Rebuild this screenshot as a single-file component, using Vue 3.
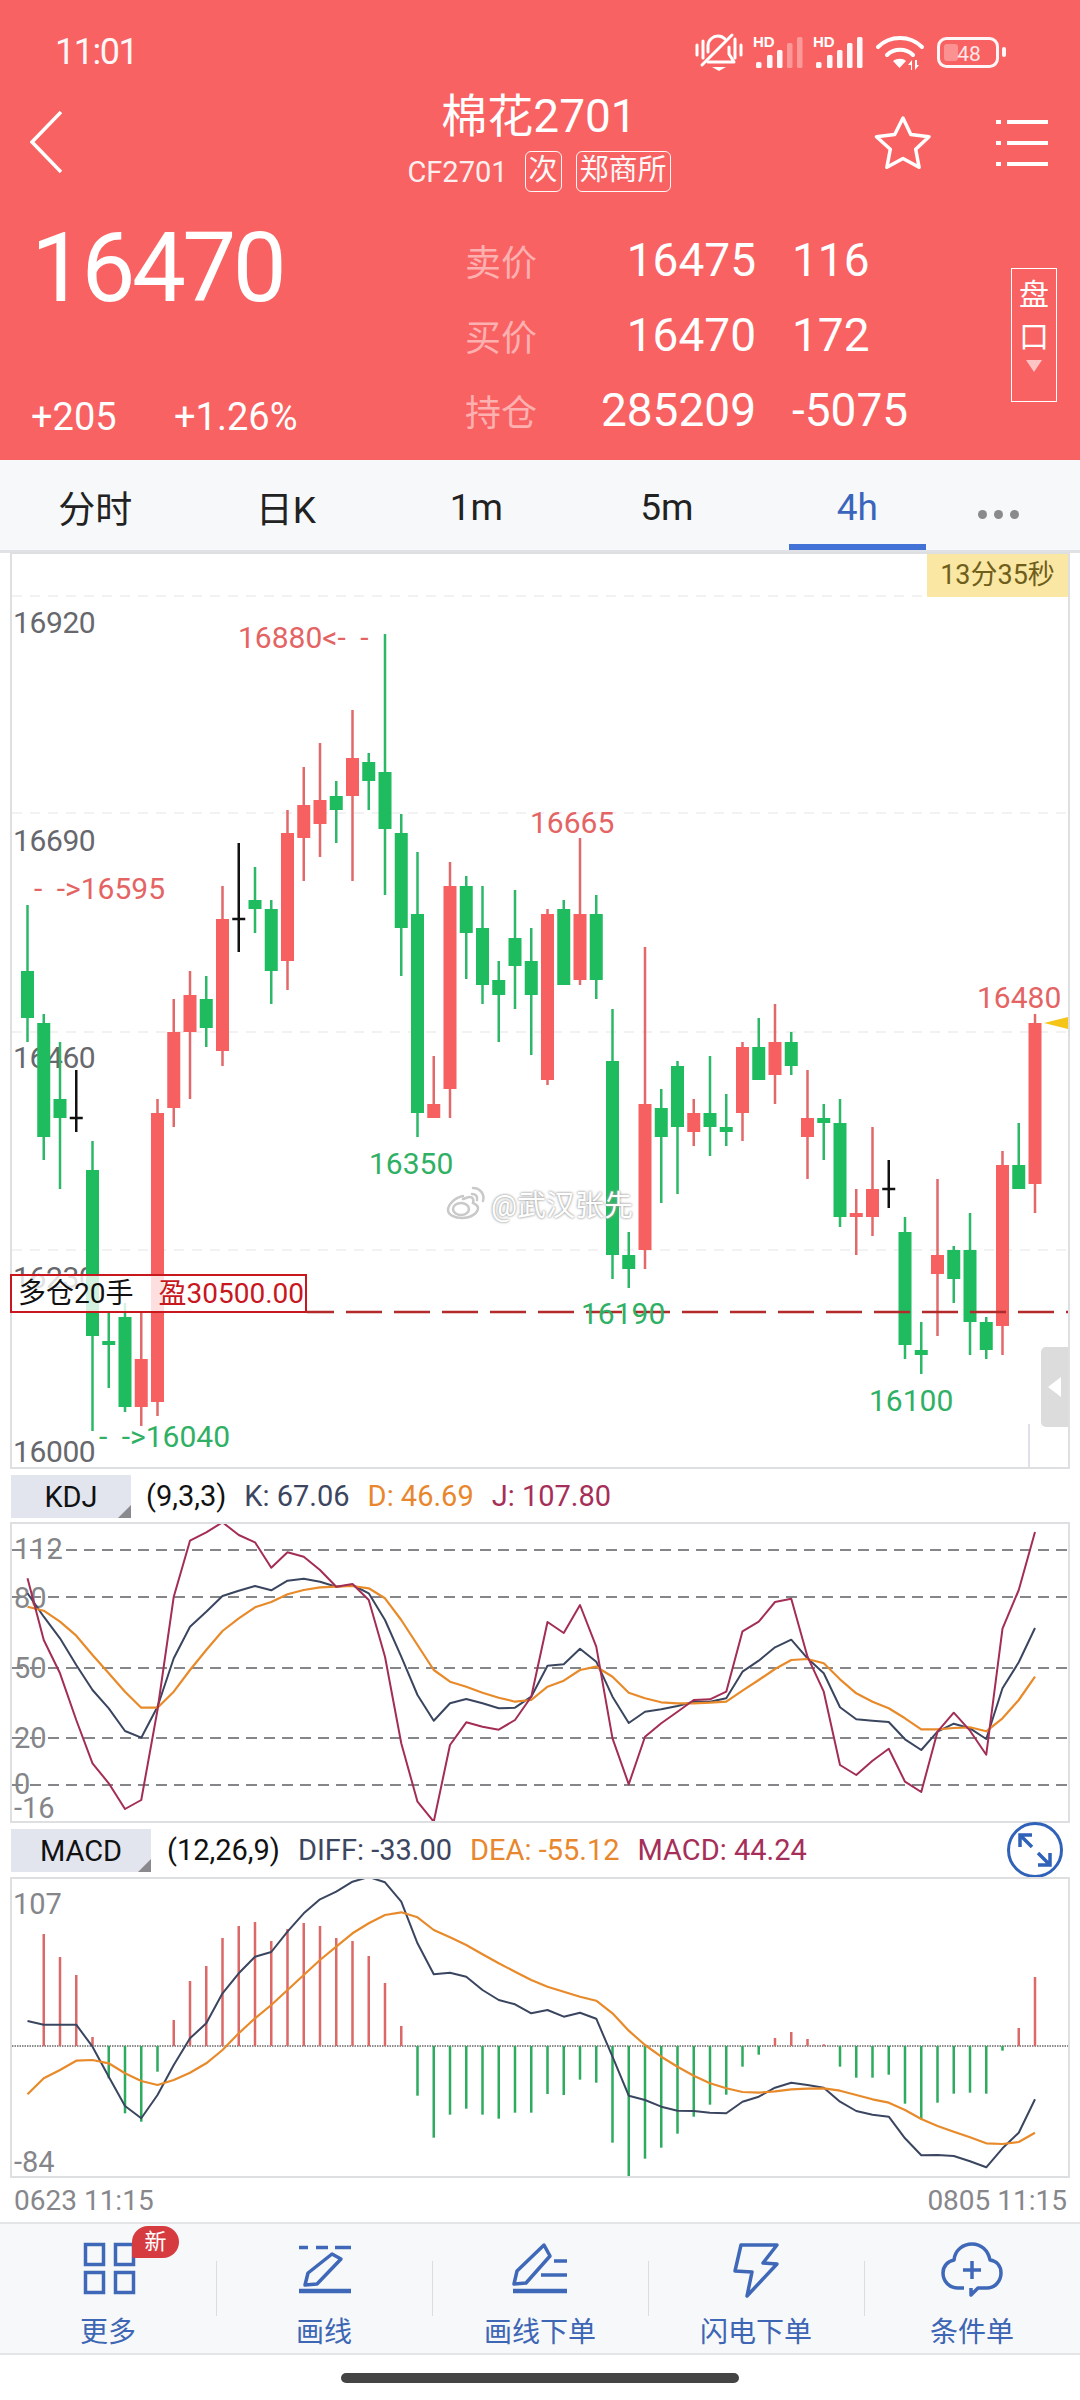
<script setup>
const X = (i) => 27.5 + i * 16.25

const raw = [
  ['g',905,971,1018,1042],['g',1014,1023,1137,1160],['g',1042,1099,1118,1189],['k',1070,1118,1118,1132],
  ['g',1141,1170,1336,1431],['g',1312,1341,1345,1388],['g',1303,1317,1407,1412],['r',1312,1359,1407,1426],
  ['r',1099,1113,1402,1416],['r',999,1032,1108,1127],['r',971,995,1032,1099],['g',976,999,1028,1047],
  ['r',886,919,1051,1066],['k',843,919,919,952],['g',867,900,909,933],['g',900,909,971,1004],
  ['r',810,833,961,990],['r',767,805,838,881],['r',743,800,824,857],['g',781,796,810,843],
  ['r',710,758,796,881],['g',753,762,781,810],['g',634,772,829,895],['g',814,833,928,976],
  ['g',852,914,1113,1137],['r',1056,1104,1118,1118],['r',862,886,1089,1118],['g',876,886,933,979],
  ['g',886,928,985,1004],['g',961,980,995,1042],['g',890,938,966,1009],['g',928,961,995,1055],
  ['r',909,914,1080,1085],['g',900,909,985,985],['r',838,914,980,985],['g',895,914,980,999],
  ['g',1009,1061,1255,1279],['g',1232,1255,1269,1288],['r',947,1104,1250,1269],['g',1089,1108,1137,1203],
  ['g',1061,1066,1127,1194],['r',1099,1113,1132,1146],['g',1056,1113,1127,1156],['g',1094,1127,1132,1146],
  ['r',1042,1047,1113,1141],['g',1018,1047,1080,1080],['r',1004,1042,1075,1104],['g',1032,1042,1066,1075],
  ['r',1070,1118,1137,1179],['g',1104,1118,1123,1160],['g',1099,1123,1217,1227],['r',1189,1213,1217,1255],
  ['r',1127,1189,1217,1236],['k',1160,1189,1189,1208],['g',1217,1232,1345,1359],['g',1322,1350,1355,1374],
  ['r',1179,1255,1274,1336],['g',1246,1250,1279,1303],['g',1213,1250,1322,1355],['g',1317,1322,1350,1359],
  ['r',1151,1165,1326,1355],['g',1123,1165,1189,1189],['r',1014,1023,1184,1213],
]
const candles = raw.map(([t, h, a, b, l], i) => ({ t, h, a, b, l, x: X(i) }))

const kz = [370,440,505,585,660,715,783,803,710,565,470,425,378,362,348,361,332,326,335,350,345,370,450,560,675,752,700,687,700,715,713,680,587,583,536,575,680,759,725,718,708,695,695,685,605,572,532,509,565,610,712,748,752,756,808,840,785,761,775,807,655,577,474]
const dz = [410,422,455,497,555,610,665,713,713,665,600,540,483,445,412,396,373,360,352,350,348,355,385,450,525,600,635,650,668,683,695,690,650,632,600,590,620,668,685,697,700,700,698,695,662,630,597,570,567,580,628,670,695,715,745,778,778,774,772,784,745,690,620]
const jz = [325,510,610,750,880,940,1017,990,720,380,212,187,157,195,217,293,247,260,300,350,342,390,560,820,995,1055,825,757,770,779,750,680,456,489,405,530,805,943,800,760,725,690,688,665,484,455,396,386,560,665,885,915,872,836,935,966,785,728,782,854,476,360,186]
const difz = [603,614,614,614,680,770,858,895,825,735,655,610,520,460,410,396,335,280,238,215,185,171,187,245,370,463,458,470,510,540,553,580,570,590,578,596,710,827,840,860,872,873,878,880,845,830,803,788,795,803,845,873,884,890,955,1006,1005,1008,1024,1042,985,938,838]
const deaz = [823,775,750,722,720,730,760,783,795,780,758,730,690,640,595,555,510,465,420,380,340,310,285,277,292,330,352,375,403,430,455,480,500,515,530,542,580,632,675,710,740,767,790,805,816,818,814,808,806,805,812,825,838,848,870,897,918,935,952,970,972,966,938]
const hz = [678,342,411,465,651,775,880,905,755,600,483,438,354,318,306,363,327,309,318,354,363,408,489,618,827,953,884,866,884,896,878,878,822,825,779,788,968,1073,1016,983,941,890,854,824,740,704,654,636,657,673,740,773,773,764,851,898,848,821,818,821,692,624,471]

const pts = (arr, base) => arr.map((z, i) => `${X(i)},${(base + z / 3).toFixed(1)}`).join(' ')
const kLine = pts(kz, 1470)
const dLine = pts(dz, 1470)
const jLine = pts(jz, 1470)
const difLine = pts(difz, 1820)
const deaLine = pts(deaz, 1820)
const bars = hz.map((z, i) => {
  const up = z < 678
  return { x: X(i) - 1.25, y: 1820 + Math.min(z, 678) / 3, h: Math.abs(z - 678) / 3, up }
}).filter((b) => b.h > 0)

const axis = [['16920',633],['16690',851],['16460',1068],['16230',1288],['16000',1462]]
const gridY = [596, 813, 1032, 1250]
const annots = [
  { t: '16880<- -', x: 238, y: 648, c: 'up' },
  { t: '- ->16595', x: 34, y: 899, c: 'up' },
  { t: '16665', x: 530, y: 833, c: 'up' },
  { t: '16480', x: 977, y: 1008, c: 'up' },
  { t: '16350', x: 369, y: 1174, c: 'down' },
  { t: '- ->16040', x: 99, y: 1447, c: 'down' },
  { t: '16190', x: 581, y: 1324, c: 'down' },
  { t: '16100', x: 869, y: 1411, c: 'down' },
]
const kdjGrid = [1550, 1597, 1668, 1738, 1785]
const kdjLabels = [['112',1559],['80',1608],['50',1678],['20',1748],['0',1794],['-16',1818]]

const tabs = ['分时', '日K', '1m', '5m', '4h']
const quotes = [
  { label: '卖价', val: '16475', qty: '116' },
  { label: '买价', val: '16470', qty: '172' },
  { label: '持仓', val: '285209', qty: '-5075' },
]
const sigA = [[762,62],[773,55],[783,50],[793,43],[803,37]]
const sigB = sigA.map(([x, y]) => [x + 60, y])
</script>

<template>
  <div class="page">
    <header class="head">
      <div class="status">
        <span class="time">11:01</span>
        <svg class="status-icons" width="320" height="44" viewBox="698 30 320 44">
          <g fill="none" stroke="#fff" stroke-width="3" stroke-linecap="round" stroke-linejoin="round">
            <path d="M703 45v10M709 41v17M741 39v19M747 45v10" />
            <path d="M714 52v-6c0-6 5-10 10-10 3 0 5 1 7 3M735 47v7l5 8h-26" />
            <path d="M708 65l30-30" />
          </g>
          <path d="M718 67h14l-7 4z" fill="#fff" />
          <text x="759" y="47" class="hd">HD</text>
          <rect v-for="(b, i) in sigA" :key="'a' + i" :x="b[0]" :y="b[1]" width="5.5" :height="68 - b[1]" rx="1.5" fill="#fff" :opacity="i > 2 ? 0.35 : 0.95" />
          <text x="819" y="47" class="hd">HD</text>
          <rect v-for="(b, i) in sigB" :key="'b' + i" :x="b[0]" :y="b[1]" width="5.5" :height="68 - b[1]" rx="1.5" fill="#fff" opacity="0.95" />
          <g fill="none" stroke="#fff" stroke-width="4" stroke-linecap="round">
            <path d="M884 47c12-12 32-12 44 0" />
            <path d="M893 55c7-7 19-7 26 0" />
          </g>
          <path d="M899 61c4-3 10-3 13 0l-6.500 7z" fill="#fff" />
          <path d="M917 70v-5h-3l4-5v10zM921 60v10l4-5h-2v-5z" fill="#fff" />
          <rect x="944.500" y="38.500" width="59" height="28" rx="8" fill="none" stroke="#fff" stroke-width="3" opacity="0.95" />
          <rect x="950" y="44" width="14" height="17" rx="3" fill="#fff" opacity="0.3" />
          <text x="975" y="60.500" class="bat">48</text>
          <rect x="1008" y="47" width="4" height="10" rx="2" fill="#fff" opacity="0.95" />
        </svg>
      </div>

      <div class="nav">
        <svg class="back" width="32" height="62" viewBox="0 0 32 62">
          <path d="M31 1L2 31l29 30" fill="none" stroke="#fff" stroke-width="3.500" />
        </svg>
        <div class="title-block">
          <div class="title">棉花2701</div>
          <div class="sub">
            <span class="code">CF2701</span>
            <span class="chip">次</span>
            <span class="chip">郑商所</span>
          </div>
        </div>
        <div class="nav-right">
          <svg width="58" height="54" viewBox="0 0 58 54">
            <path d="M29 3l7.800 16.500 18.200 2.300-13.300 12.500 3.400 18-16.100-8.800-16.100 8.800 3.400-18L2.500 21.800l18.200-2.300z" fill="none" stroke="#fff" stroke-width="3.500" stroke-linejoin="round" />
          </svg>
          <svg width="52" height="48" viewBox="0 0 52 48">
            <g fill="#fff">
              <rect x="0" y="2" width="5" height="4" /><rect x="11" y="2" width="41" height="4" />
              <rect x="0" y="23" width="5" height="4" /><rect x="11" y="23" width="41" height="4" />
              <rect x="0" y="44" width="5" height="4" /><rect x="11" y="44" width="41" height="4" />
            </g>
          </svg>
        </div>
      </div>

      <div class="quote">
        <div class="quote-left">
          <div class="price">16470</div>
          <div class="change"><span class="chg-a">+205</span><span>+1.26%</span></div>
        </div>
        <div class="table">
          <div v-for="q in quotes" :key="q.label" class="row">
            <span class="lab">{{ q.label }}</span>
            <span class="val">{{ q.val }}</span>
            <span class="qty">{{ q.qty }}</span>
          </div>
        </div>
        <div class="pankou">
          <span>盘</span><span>口</span><i class="caret"></i>
        </div>
      </div>
    </header>

    <nav class="tabs">
      <div v-for="(t, i) in tabs" :key="t" class="tab" :class="{ active: i === 4 }">{{ t }}</div>
      <div class="tab more"><i></i><i></i><i></i></div>
    </nav>

    <section class="pane main-pane">
      <svg class="chart" width="1056" height="913" viewBox="12 554 1056 913">
        <line v-for="y in gridY" :key="y" x1="12" x2="1068" :y1="y" :y2="y" class="grid" />
        <text v-for="a in axis" :key="a[0]" x="13" :y="a[1]" class="axis">{{ a[0] }}</text>
        <g v-for="(c, i) in candles" :key="i">
          <rect :x="c.x - 1.25" :y="c.h" width="2.500" :height="c.l - c.h" :class="'w-' + c.t" />
          <rect v-if="c.t === 'k'" :x="c.x - 6.5" :y="c.a - 1.25" width="13" height="2.500" class="w-k" />
          <rect v-else :x="c.x - 6.5" :y="c.a" width="13" :height="c.b - c.a" :class="'b-' + c.t" />
        </g>
        <path d="M307 1312H334M346 1312H1068" class="pos-line" />
        <text v-for="a in annots" :key="a.t" :x="a.x" :y="a.y" class="ann" :class="a.c">{{ a.t }}</text>
        <path d="M1068 1017v12l-24-6z" fill="#f5c518" />
        <line x1="1029" x2="1029" y1="1424" y2="1467" stroke="#dfe1ea" stroke-width="2" />
      </svg>
      <div class="countdown">13分35秒</div>
      <div class="pos-box">
        <span>多仓20手</span><span class="pos-pl">盈30500.00</span>
      </div>
      <div class="handle"><i></i></div>
      <div class="mark">
        <svg width="40" height="34" viewBox="0 0 40 34">
          <g fill="none" stroke="#c9c9c9" stroke-width="2.500" stroke-linecap="round">
            <path d="M17 10C8 12 2 19 2 24c0 5 7 8 14 8 9 0 16-5 16-10 0-3-3-4-5-5 1-3 0-6-3-6-2 0-4 1-7 2" />
            <ellipse cx="15" cy="23" rx="8" ry="6" />
            <path d="M26 8c4 0 6 3 5 6M27 2c7 0 12 6 10 13" />
          </g>
        </svg>
        <span>@武汉张先</span>
      </div>
    </section>

    <div class="ind-row kdj-row">
      <div class="tag tag-kdj">KDJ</div>
      <span class="param">(9,3,3)</span>
      <span class="k">K: 67.06</span>
      <span class="d">D: 46.69</span>
      <span class="j">J: 107.80</span>
    </div>
    <section class="pane ind-pane">
      <svg class="chart" width="1056" height="297" viewBox="12 1524 1056 297">
        <text v-for="l in kdjLabels" :key="l[0]" x="14" :y="l[1]" class="axis2">{{ l[0] }}</text>
        <line v-for="y in kdjGrid" :key="y" x1="12" x2="1068" :y1="y" :y2="y" class="dash" />
        <polyline :points="kLine" class="ln kline" />
        <polyline :points="dLine" class="ln dline" />
        <polyline :points="jLine" class="ln jline" />
      </svg>
    </section>

    <div class="ind-row macd-row">
      <div class="tag tag-macd">MACD</div>
      <span class="param">(12,26,9)</span>
      <span class="k">DIFF: -33.00</span>
      <span class="d">DEA: -55.12</span>
      <span class="j">MACD: 44.24</span>
      <svg class="expand" width="58" height="58" viewBox="0 0 58 58">
        <circle cx="29" cy="29" r="26.500" fill="none" stroke="#2f62b8" stroke-width="3" />
        <g fill="none" stroke="#2f62b8" stroke-width="3.500">
          <path d="M14 26V14h12M14 14l12 12" />
          <path d="M44 32v12H32M44 44L32 32" />
        </g>
      </svg>
    </div>
    <section class="pane ind-pane">
      <svg class="chart" width="1056" height="297" viewBox="12 1879 1056 297">
        <text x="13" y="1914" class="axis2">107</text>
        <text x="14" y="2172" class="axis2">-84</text>
        <line x1="12" x2="1068" y1="2046" y2="2046" class="zero" />
        <rect v-for="(b, i) in bars" :key="i" :x="b.x" :y="b.y" width="2.500" :height="b.h" :class="b.up ? 'hist-up' : 'hist-down'" />
        <polyline :points="difLine" class="ln kline" />
        <polyline :points="deaLine" class="ln dline" />
      </svg>
    </section>

    <div class="dates"><span>0623 11:15</span><span>0805 11:15</span></div>

    <footer class="bar">
      <div class="item">
        <svg width="216" height="86" viewBox="0 2224 216 86">
          <g fill="none" class="ic">
            <rect x="85.500" y="2244.500" width="18" height="20" /><rect x="115.500" y="2244.500" width="18" height="20" />
            <rect x="85.500" y="2272.500" width="18" height="20" /><rect x="115.500" y="2272.500" width="18" height="20" />
          </g>
        </svg>
        <div class="badge">新</div>
        <div class="lbl">更多</div>
      </div>
      <div class="item">
        <svg width="216" height="86" viewBox="216 2224 216 86">
          <g fill="none" class="ic">
            <path d="M299 2247.500h9M316 2247.500h12M335 2247.500h16" />
            <path d="M332 2254l9 5-24 25-12 1 3-12z" stroke-linejoin="round" />
            <path d="M299 2291h52" stroke-width="4.500" />
          </g>
        </svg>
        <div class="lbl">画线</div>
      </div>
      <div class="item">
        <svg width="216" height="86" viewBox="432 2224 216 86">
          <g fill="none" class="ic">
            <path d="M544 2245l6 11-24 27-12 1 3-13z" stroke-linejoin="round" />
            <path d="M554 2261h13M541 2275h26" />
            <path d="M513 2291h54" stroke-width="4.500" />
          </g>
        </svg>
        <div class="lbl">画线下单</div>
      </div>
      <div class="item">
        <svg width="216" height="86" viewBox="648 2224 216 86">
          <path d="M741 2245h36l-14 18 14 1-30 32 5-24-17-1z" fill="none" class="ic" stroke-linejoin="round" />
        </svg>
        <div class="lbl">闪电下单</div>
      </div>
      <div class="item">
        <svg width="216" height="86" viewBox="864 2224 216 86">
          <g fill="none" class="ic" stroke-linejoin="round">
            <path d="M964 2288h-6c-9 0-15-7-15-15 0-7 5-12 11-13 1-10 9-16 18-16s16 6 18 16c7 1 11 6 11 13 0 8-6 15-14 15h-9l-7 7v-7" />
            <path d="M972 2261v18M963 2270h18" />
          </g>
        </svg>
        <div class="lbl">条件单</div>
      </div>
    </footer>

    <div class="home"><i></i></div>
  </div>
</template>

<style scoped>
.page {
  width: 1080px;
  height: 2400px;
  background: #fff;
  overflow: hidden;
  font-family: Roboto, "Noto Sans CJK SC", sans-serif;
  color: #222;
}
.head {
  height: 460px;
  background: #f96262;
  color: #fff;
}
.status {
  height: 84px;
  padding: 20px 68px 0 55px;
  box-sizing: border-box;
  display: flex;
  justify-content: space-between;
  align-items: center;
}
.time {
  font-size: 36px;
  letter-spacing: -1.5px;
  line-height: 64px;
  opacity: 0.95;
}
.status-icons {
  margin-top: 0;
}
.hd {
  font: bold 15px "Liberation Sans", sans-serif;
  fill: #fff;
}
.bat {
  font: 21px Roboto, sans-serif;
  fill: #fff;
  opacity: 0.85;
  text-anchor: middle;
}
.nav {
  height: 116px;
  padding: 0 32px 0 30px;
  display: grid;
  grid-template-columns: 1fr auto 1fr;
  align-items: center;
}
.title-block {
  display: flex;
  flex-direction: column;
  align-items: center;
  margin-top: -6px;
}
.title {
  font-size: 46px;
  line-height: 60px;
  margin-top: 0;
}
.sub {
  margin-top: 5px;
  display: flex;
  align-items: center;
  height: 41px;
  font-size: 29px;
  color: #fff;
}
.code {
  margin-right: 17px;
  opacity: 0.9;
}
.chip {
  border: 1.5px solid #fff;
  border-radius: 6px;
  height: 41px;
  box-sizing: border-box;
  padding: 0 3px;
  line-height: 37px;
  font-size: 29px;
  margin-right: 14px;
  opacity: 0.95;
}
.chip:last-child {
  margin-right: 0;
}
.nav-right {
  display: flex;
  justify-content: flex-end;
  align-items: center;
  gap: 64px;
}
.quote {
  display: flex;
  padding-left: 31px;
}
.quote-left {
  width: 434px;
  flex: none;
}
.price {
  font-size: 96px;
  line-height: 100px;
  letter-spacing: -3.500px;
  margin-top: 18px;
}
.change {
  display: flex;
  margin-top: 74px;
  font-size: 38px;
  line-height: 50px;
}
.chg-a {
  width: 143px;
}
.table {
  width: 546px;
  flex: none;
  margin-top: 22px;
}
.row {
  display: grid;
  grid-template-columns: 72px 219px 36px auto;
  height: 75px;
  align-items: center;
}
.lab {
  font-size: 36px;
  color: #fcb0b0;
}
.val {
  grid-column: 2;
  text-align: right;
  font-size: 46px;
}
.qty {
  grid-column: 4;
  font-size: 46px;
}
.pankou {
  width: 46px;
  height: 134px;
  margin-top: 68px;
  border: 1.5px solid #fff;
  box-sizing: border-box;
  display: flex;
  flex-direction: column;
  align-items: center;
  font-size: 30px;
  line-height: 42px;
  padding-top: 5px;
  color: #fff;
}
.caret {
  width: 0;
  height: 0;
  border-left: 8px solid transparent;
  border-right: 8px solid transparent;
  border-top: 12px solid #fcc4c4;
  margin-top: 2px;
}
.tabs {
  height: 93px;
  box-sizing: border-box;
  background: #f7f8f9;
  border-bottom: 3px solid #e0e2e6;
  display: grid;
  grid-template-columns: repeat(5, 190.500px) 1fr;
  padding-right: 36px;
}
.tab {
  height: 90px;
  display: flex;
  align-items: center;
  justify-content: center;
  font-size: 37px;
  color: #222;
  box-sizing: border-box;
  padding-top: 4px;
  position: relative;
}
.tab.active {
  color: #3a65bd;
}
.tab.active::after {
  content: "";
  position: absolute;
  left: 27px;
  right: 27px;
  bottom: 0;
  height: 6px;
  background: #4372d6;
}
.tab.more {
  gap: 7px;
  padding-top: 18px;
}
.tab.more i {
  width: 9px;
  height: 9px;
  border-radius: 50%;
  background: #8a8a8a;
}
.pane {
  position: relative;
  width: 1060px;
  margin-left: 10px;
  border: 2px solid #dedfe1;
  box-sizing: border-box;
  background: #fff;
}
.main-pane {
  height: 917px;
  margin-top: -1px;
}
.ind-pane {
  height: 301px;
}
.chart {
  display: block;
}
.grid {
  stroke: #eeeef0;
  stroke-width: 1.500;
  stroke-dasharray: 10 8;
}
.axis {
  font-size: 30px;
  letter-spacing: -0.400px;
  fill: #67686d;
}
.axis2 {
  font-size: 29px;
  fill: #85868a;
}
.w-g { fill: #2db868; }
.w-r { fill: #e2696a; }
.w-k { fill: #111; }
.b-g { fill: #1fbb5f; }
.b-r { fill: #f66061; }
.pos-line {
  stroke: #b32a2a;
  stroke-width: 2.500;
  stroke-dasharray: 36 12;
  fill: none;
}
.ann {
  font-size: 30px;
  word-spacing: 7px;
}
.ann.up { fill: #e46464; }
.ann.down { fill: #2fb064; }
.countdown {
  position: absolute;
  top: 0;
  right: 0;
  width: 141px;
  height: 43px;
  background: #f9e7a3;
  color: #6f5e1a;
  font-size: 27px;
  line-height: 43px;
  text-align: center;
}
.pos-box {
  position: absolute;
  left: -2px;
  top: 720px;
  width: 297px;
  height: 39px;
  box-sizing: border-box;
  border: 2px solid #c8171d;
  background: rgba(255, 255, 255, 0.8);
  font-size: 28px;
  line-height: 35px;
  padding-left: 6px;
  color: #111;
  white-space: nowrap;
}
.pos-pl {
  color: #c8171d;
  margin-left: 25px;
}
.handle {
  position: absolute;
  left: 1029px;
  top: 793px;
  width: 27px;
  height: 80px;
  background: #dcdcdc;
  border-radius: 5px 0 0 5px;
  display: flex;
  align-items: center;
  justify-content: center;
}
.handle i {
  border-top: 10px solid transparent;
  border-bottom: 10px solid transparent;
  border-right: 13px solid #fff;
}
.mark {
  position: absolute;
  left: 434px;
  top: 628px;
  display: flex;
  align-items: center;
  gap: 5px;
  font-size: 29px;
  color: #fff;
  text-shadow: 0 0 3px #9a9a9a, 0 0 2px #b0b0b0;
  white-space: nowrap;
}
.ind-row {
  display: flex;
  align-items: center;
  height: 54px;
  font-size: 29px;
  white-space: nowrap;
  box-sizing: border-box;
  position: relative;
}
.kdj-row { height: 53px; padding-top: 1px; }
.tag {
  position: relative;
  margin-left: 11px;
  height: 43px;
  background: #e2e5ee;
  color: #111;
  text-align: center;
  line-height: 44px;
  font-size: 29px;
  flex: none;
}
.tag::after {
  content: "";
  position: absolute;
  right: 0;
  bottom: 0;
  border-left: 13px solid transparent;
  border-bottom: 13px solid #8a8a8e;
}
.tag-kdj {
  width: 120px;
  margin-right: 15px;
}
.tag-macd {
  width: 140px;
  margin-right: 16px;
}
.param {
  color: #111;
  margin-right: 18px;
}
.k {
  color: #3c4660;
  margin-right: 18px;
}
.d {
  color: #e8872e;
  margin-right: 18px;
}
.j {
  color: #a62f59;
}
.expand {
  margin-left: auto;
  margin-right: 16px;
}
.ln {
  fill: none;
  stroke-width: 2;
  stroke-linejoin: round;
}
.kline { stroke: #3a4560; }
.dline { stroke: #e88a2a; stroke-width: 2.200; }
.jline { stroke: #a32d55; }
.dash {
  stroke: #85868a;
  stroke-width: 2;
  stroke-dasharray: 11 7;
}
.zero {
  stroke: #8c8c8c;
  stroke-width: 2;
  stroke-dasharray: 1.500 1;
}
.hist-up { fill: #dc6868; }
.hist-down { fill: #2dab5e; }
.dates {
  height: 44px;
  display: flex;
  justify-content: space-between;
  align-items: center;
  padding: 0 13px 0 14px;
  font-size: 28px;
  color: #87878b;
}
.bar {
  height: 133px;
  box-sizing: border-box;
  background: #f7f8f9;
  border-top: 2px solid #e4e5e7;
  border-bottom: 2px solid #e4e5e7;
  display: grid;
  grid-template-columns: repeat(5, 216px);
}
.item {
  position: relative;
  text-align: center;
}
.item svg {
  display: block;
}
.item + .item::before {
  content: "";
  position: absolute;
  left: 0;
  top: 37px;
  width: 1px;
  height: 55px;
  background: #dcdddf;
}
.ic {
  stroke: #3f68b8;
  stroke-width: 3.500;
}
.lbl {
  margin-top: 3px;
  font-size: 28px;
  line-height: 40px;
  color: #3d66b4;
}
.badge {
  position: absolute;
  left: 132px;
  top: 2px;
  width: 47px;
  height: 32px;
  background: #d63c3f;
  border-radius: 17px 17px 17px 3px;
  color: #fff;
  font-size: 22px;
  line-height: 32px;
  text-align: center;
}
.home {
  padding-top: 18px;
  display: flex;
  justify-content: center;
}
.home i {
  width: 398px;
  height: 10px;
  border-radius: 5px;
  background: #444;
}
</style>
